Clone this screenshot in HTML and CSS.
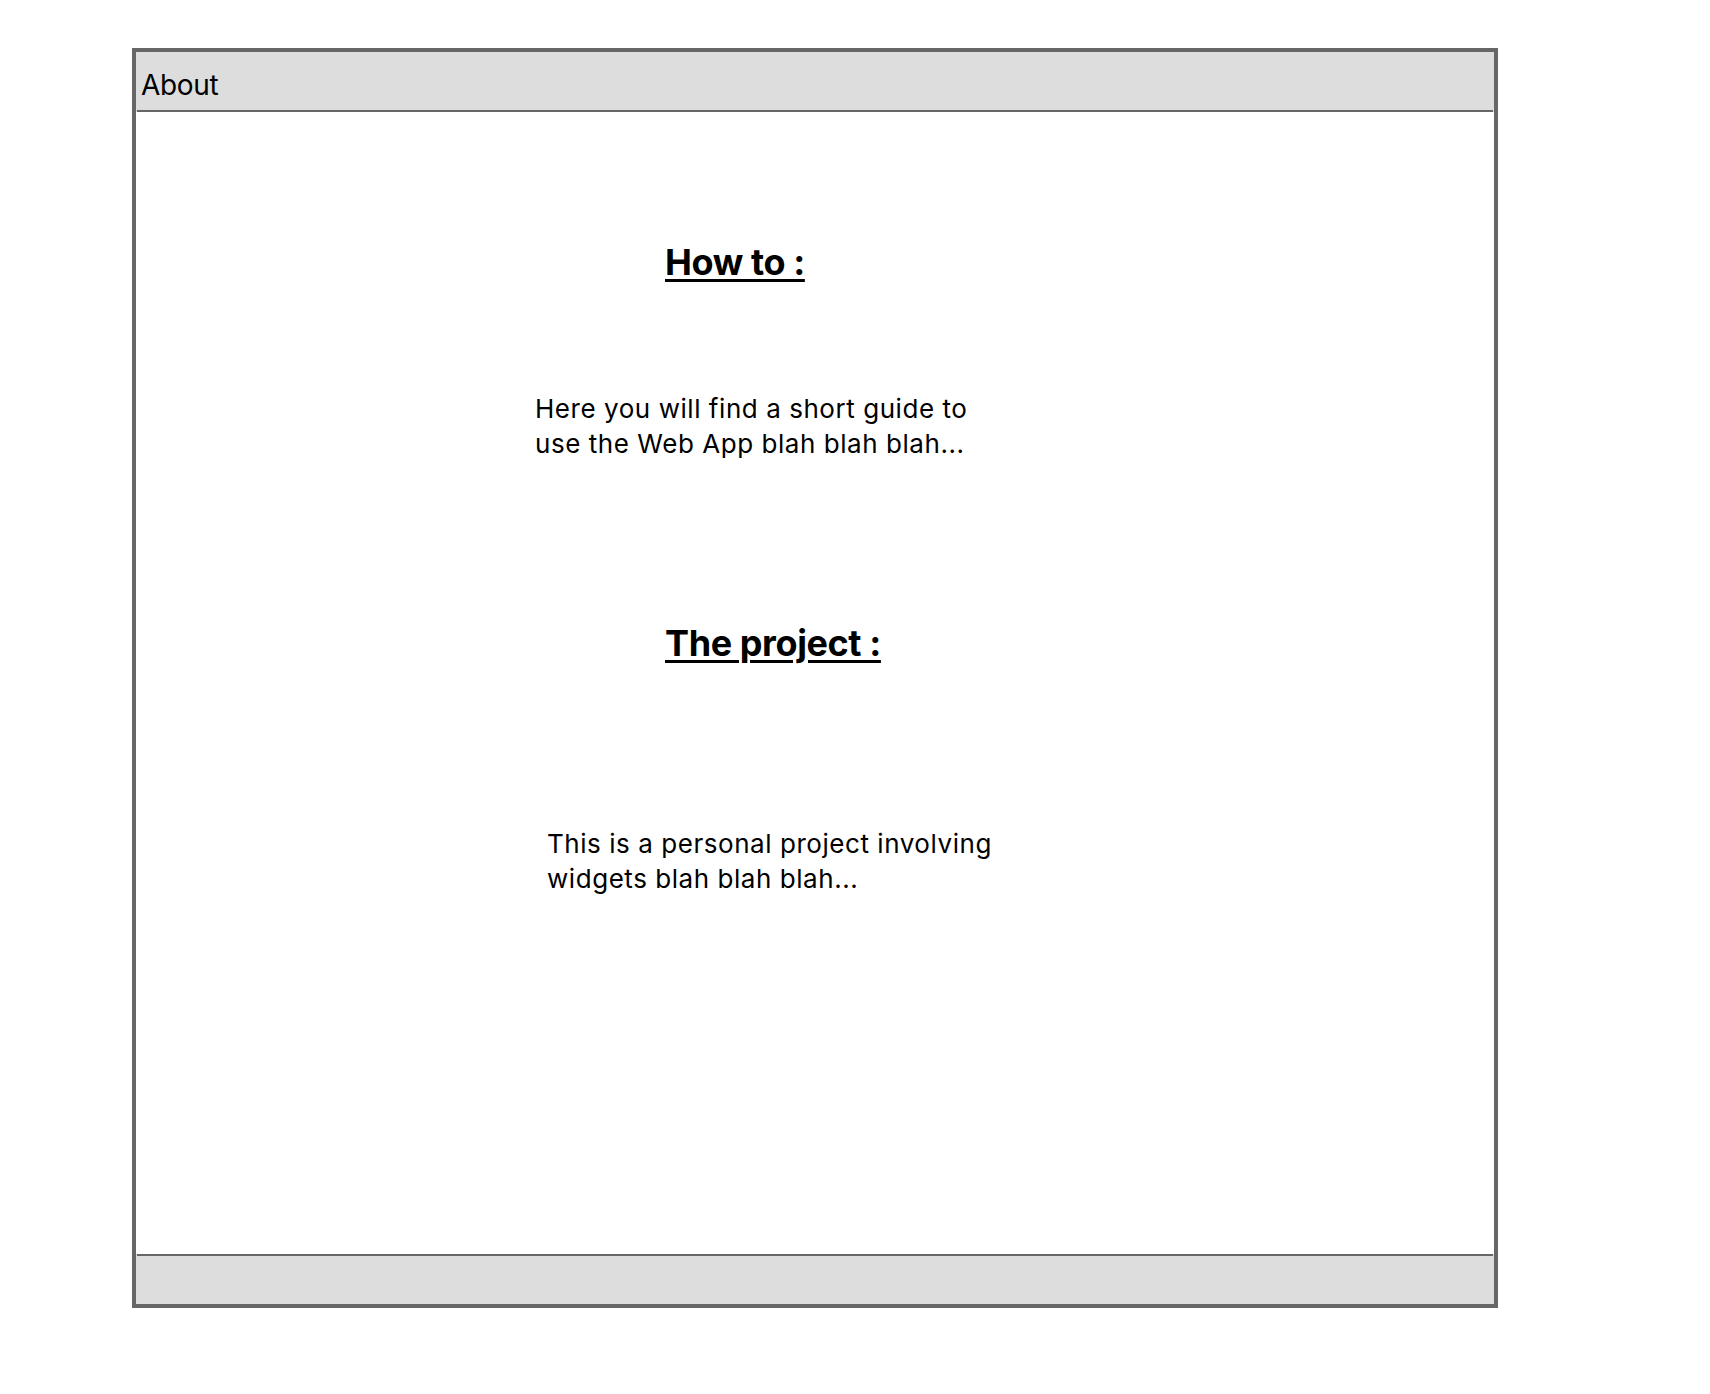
FILE: index.html
```html
<!DOCTYPE html>
<html lang="en">
<head>
<meta charset="utf-8">
<title>About</title>
<link rel="stylesheet" href="styles.css">
</head>
<body>
<div class="frame">
  <header class="header">About</header>
  <main class="main">
    <h2 class="heading heading-howto">How to :</h2>
    <p class="para para-howto">Here you will find a short guide to<br>use the Web App blah blah blah...</p>
    <h2 class="heading heading-project">The project :</h2>
    <p class="para para-project">This is a personal project involving<br>widgets blah blah blah...</p>
  </main>
  <footer class="footer"></footer>
</div>
</body>
</html>
```
FILE: styles.css
```css
html, body {
  margin: 0;
  padding: 0;
  background: #fff;
}
body {
  font-family: Inter, "Noto Sans", sans-serif;
  color: #000;
}
.frame {
  margin: 48px 0 0 132px;
  width: 1366px;
  height: 1260px;
  box-sizing: border-box;
  border: 4px solid #666;
  display: flex;
  flex-direction: column;
}
.header {
  height: 60px;
  box-sizing: border-box;
  padding: 15px 0 0 5px;
  font-size: 28px;
  line-height: 36px;
  letter-spacing: -0.3px;
  background: linear-gradient(#666, #666) no-repeat center bottom / calc(100% - 2px) 2px, #ddd;
}
.main {
  flex: 1;
  display: flex;
  flex-direction: column;
  align-items: flex-start;
}
.heading {
  margin: 0;
  margin-left: 529px;
  font-size: 36px;
  line-height: 44px;
  font-weight: 700;
  text-decoration: underline;
  text-decoration-thickness: 3px;
  text-underline-offset: 4px;
  letter-spacing: -0.4px;
}
.heading-howto { margin-top: 128px; }
.heading-project { margin-top: 160px; }
.para {
  margin: 0;
  font-size: 26px;
  line-height: 35px;
  letter-spacing: 0.55px;
}
.para-howto { margin-top: 107px; margin-left: 399px; }
.para-project { margin-top: 161px; margin-left: 411px; }
.footer {
  height: 50px;
  background: linear-gradient(#666, #666) no-repeat center top / calc(100% - 2px) 2px, #ddd;
}
```
